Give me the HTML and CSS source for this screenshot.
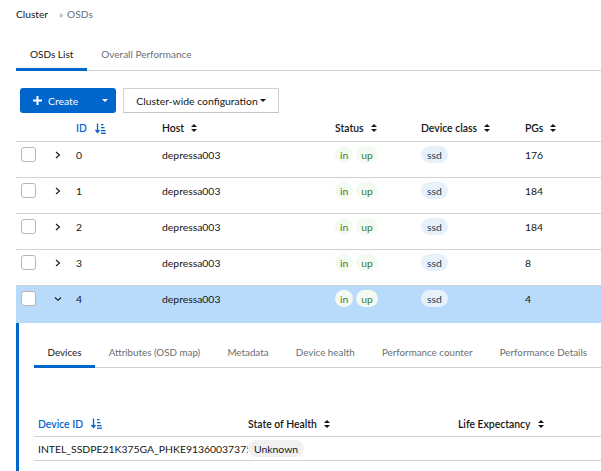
FILE: index.html
```html
<!DOCTYPE html>
<html>
<head>
<meta charset="utf-8">
<link rel="stylesheet" href="styles.css">
</head>
<body>
<div class="page">
  <nav class="breadcrumb">
    <span class="crumb">Cluster</span>
    <span class="sep">»</span>
    <span class="crumb current">OSDs</span>
  </nav>

  <div class="tabs">
    <div class="tab active">OSDs List</div>
    <div class="tab">Overall Performance</div>
  </div>

  <div class="toolbar">
    <div class="btn-primary">
      <span class="plus"><svg width="9" height="9" viewBox="0 0 9 9"><rect x="3.5" y="0" width="2" height="9" fill="#fff"/><rect x="0" y="3.5" width="9" height="2" fill="#fff"/></svg></span>
      <span class="btn-label">Create</span>
      <span class="caret white"></span>
    </div>
    <div class="btn-secondary">Cluster-wide configuration<span class="caret dark"></span></div>
  </div>

  <div class="table">
    <div class="row head">
      <div></div>
      <div></div>
      <div class="th sorted">ID <svg class="sort-amount" width="11" height="11" viewBox="0 0 11 11"><path d="M2.5 0.5v8.5M0.5 7l2 2.5 2-2.5" stroke="#0066cc" stroke-width="1.3" fill="none"/><rect x="6" y="1" width="2.5" height="1.3" fill="#0066cc"/><rect x="6" y="4" width="3.5" height="1.3" fill="#0066cc"/><rect x="6" y="7" width="4.5" height="1.3" fill="#0066cc"/><rect x="6" y="9.6" width="5" height="1.3" fill="#0066cc"/></svg></div>
      <div class="th">Host <span class="sort"></span></div>
      <div class="th">Status <span class="sort"></span></div>
      <div class="th">Device class <span class="sort"></span></div>
      <div class="th">PGs <span class="sort"></span></div>
    </div>

    <div class="row">
      <div><span class="checkbox"></span></div>
      <div><svg class="chev" width="6" height="8" viewBox="0 0 6 8"><path d="M1 1l3.5 3-3.5 3" stroke="#151515" stroke-width="1.1" fill="none"/></svg></div>
      <div>0</div>
      <div>depressa003</div>
      <div class="badges"><span class="badge green">in</span><span class="badge green">up</span></div>
      <div><span class="badge blue">ssd</span></div>
      <div>176</div>
    </div>
    <div class="row">
      <div><span class="checkbox"></span></div>
      <div><svg class="chev" width="6" height="8" viewBox="0 0 6 8"><path d="M1 1l3.5 3-3.5 3" stroke="#151515" stroke-width="1.1" fill="none"/></svg></div>
      <div>1</div>
      <div>depressa003</div>
      <div class="badges"><span class="badge green">in</span><span class="badge green">up</span></div>
      <div><span class="badge blue">ssd</span></div>
      <div>184</div>
    </div>
    <div class="row">
      <div><span class="checkbox"></span></div>
      <div><svg class="chev" width="6" height="8" viewBox="0 0 6 8"><path d="M1 1l3.5 3-3.5 3" stroke="#151515" stroke-width="1.1" fill="none"/></svg></div>
      <div>2</div>
      <div>depressa003</div>
      <div class="badges"><span class="badge green">in</span><span class="badge green">up</span></div>
      <div><span class="badge blue">ssd</span></div>
      <div>184</div>
    </div>
    <div class="row">
      <div><span class="checkbox"></span></div>
      <div><svg class="chev" width="6" height="8" viewBox="0 0 6 8"><path d="M1 1l3.5 3-3.5 3" stroke="#151515" stroke-width="1.1" fill="none"/></svg></div>
      <div>3</div>
      <div>depressa003</div>
      <div class="badges"><span class="badge green">in</span><span class="badge green">up</span></div>
      <div><span class="badge blue">ssd</span></div>
      <div>8</div>
    </div>
    <div class="row selected">
      <div><span class="checkbox"></span></div>
      <div><svg class="chev down" width="8" height="6" viewBox="0 0 8 6"><path d="M1 1.5l3 2.8 3-2.8" stroke="#151515" stroke-width="1.1" fill="none"/></svg></div>
      <div>4</div>
      <div>depressa003</div>
      <div class="badges"><span class="badge green">in</span><span class="badge green">up</span></div>
      <div><span class="badge blue">ssd</span></div>
      <div>4</div>
    </div>

    <div class="expanded">
      <div class="tabs inner">
        <div class="tab active">Devices</div>
        <div class="tab">Attributes (OSD map)</div>
        <div class="tab">Metadata</div>
        <div class="tab">Device health</div>
        <div class="tab">Performance counter</div>
        <div class="tab">Performance Details</div>
      </div>

      <div class="devtable">
        <div class="drow dhead">
          <div class="th sorted">Device ID <svg class="sort-amount" width="11" height="11" viewBox="0 0 11 11"><path d="M2.5 0.5v8.5M0.5 7l2 2.5 2-2.5" stroke="#0066cc" stroke-width="1.3" fill="none"/><rect x="6" y="1" width="2.5" height="1.3" fill="#0066cc"/><rect x="6" y="4" width="3.5" height="1.3" fill="#0066cc"/><rect x="6" y="7" width="4.5" height="1.3" fill="#0066cc"/><rect x="6" y="9.6" width="5" height="1.3" fill="#0066cc"/></svg></div>
          <div class="th">State of Health <span class="sort"></span></div>
          <div class="th">Life Expectancy <span class="sort"></span></div>
        </div>
        <div class="drow">
          <div class="clip">INTEL_SSDPE21K375GA_PHKE91360037375AGN</div>
          <div><span class="badge grey">Unknown</span></div>
          <div></div>
        </div>
      </div>
    </div>
  </div>
</div>
</body>
</html>
```

FILE: styles.css
```css
* { box-sizing: border-box; }
html, body { margin: 0; padding: 0; background: #fff; overflow: hidden; }
body {
  font-family: Lato, "Liberation Sans", sans-serif;
  font-size: 10.4px;
  color: #151515;
  width: 601px;
  height: 471px;
}
.page { padding-left: 16px; }

.breadcrumb {
  display: flex;
  align-items: center;
  height: 28px;
  font-size: 10.2px;
}
.crumb { color: #151515; }
.sep { color: #8a8d90; margin: 0 4px 0 11px; font-size: 9.5px; }
.crumb.current { color: #6a6e73; }

.tabs {
  display: flex;
  margin-top: 10px;
  border-bottom: 1px solid #d2d2d2;
  height: 33px;
  font-size: 10px;
}
.tab {
  padding: 0 14px;
  display: flex;
  align-items: center;
  color: #6a6e73;
  position: relative;
  white-space: nowrap;
}
.tab.active { color: #151515; }
.tab.active::after {
  content: "";
  position: absolute;
  left: 0; right: 0; bottom: -1px;
  height: 3px;
  background: #0066cc;
}

.toolbar {
  display: flex;
  gap: 7px;
  margin-top: 17px;
  padding-left: 4px;
}
.btn-primary {
  width: 96px;
  height: 25px;
  background: #0066cc;
  color: #fff;
  border-radius: 3px;
  display: flex;
  align-items: center;
  padding-left: 13px;
}
.plus { display: flex; width: 9px; }
.btn-label { margin-left: 6px; }
.caret {
  display: inline-block;
  width: 0; height: 0;
  border-left: 3px solid transparent;
  border-right: 3px solid transparent;
  border-top: 3.5px solid #fff;
}
.caret.white { margin-left: 24px; }
.caret.dark { border-top-color: #151515; margin-left: 2px; }
.btn-secondary {
  width: 156px;
  height: 25px;
  border: 1px solid #d2d2d2;
  border-bottom-color: #c4c4c4;
  display: flex;
  align-items: center;
  justify-content: center;
  color: #151515;
}

.table { margin-top: 2px; }
.row {
  display: grid;
  grid-template-columns: 36px 24px 86px 173px 86px 104px 1fr;
  height: 36px;
  border-bottom: 1px solid #d2d2d2;
  align-items: start;
}
.row > div {
  padding-top: 5px;
  height: 20px;
  display: flex;
  align-items: center;
  white-space: nowrap;
}
.row.head {
  height: 27px;
  align-items: center;
}
.row.head > div { padding-top: 0; height: auto; }
.row.selected { background: #b8dbfb; height: 37px; border-bottom: none; }

.th { font-weight: 600; color: #151515; }
.th.sorted { color: #0066cc; }
.sort-amount { margin-left: 8px; }
.sort {
  display: inline-block;
  width: 7px;
  height: 8px;
  margin-left: 7px;
  position: relative;
}
.sort::before, .sort::after {
  content: "";
  position: absolute;
  left: 0;
  border-left: 3.5px solid transparent;
  border-right: 3.5px solid transparent;
}
.sort::before { top: 0; border-bottom: 3.5px solid #151515; }
.sort::after { bottom: 0; border-top: 3.5px solid #151515; }

.checkbox {
  display: block;
  width: 15px;
  height: 15px;
  margin-left: 5px;
  border: 1px solid #bab5b0;
  border-radius: 3px;
  background: #fff;
}
.chev { margin-left: 3px; }
.chev.down { margin-left: 2px; }

.badges { gap: 3px; }
.badge {
  display: inline-flex;
  align-items: center;
  height: 17px;
  padding: 0 5px;
  border-radius: 9px;
}
.badge.green { background: #f3faf2; color: #3e7a33; }
.badge.blue { background: #e7f1fa; color: #263b52; padding: 0 6px; }
.badge.grey { background: #f0f0f0; color: #151515; padding: 0 6px; }

.expanded {
  border-left: 3px solid #0066cc;
  padding: 13px 0 20px 15px;
}
.tabs.inner { margin-top: 0; height: 32px; font-size: 9.8px; }
.tabs.inner .tab { padding: 0 13.6px; }

.devtable { margin-top: 43px; }
.drow {
  display: grid;
  grid-template-columns: 214px 210px 1fr;
  border-bottom: 1px solid #d2d2d2;
  height: 24px;
  align-items: center;
}
.drow.dhead { height: 26px; }
.drow > div { white-space: nowrap; display: flex; align-items: center; min-width: 0; }
.drow > div:first-child { padding-left: 4px; }
.drow > div.clip { display: block; overflow: hidden; text-overflow: clip; padding-right: 4px; }
```
